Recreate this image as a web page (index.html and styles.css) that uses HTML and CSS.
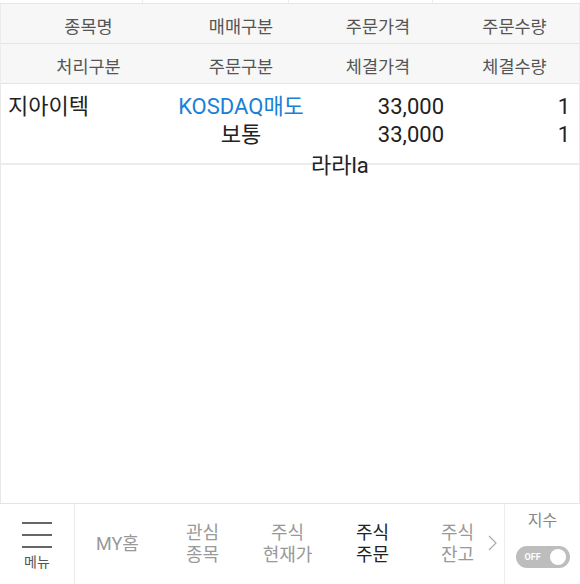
FILE: index.html
```html
<!doctype html>
<html lang="ko">
<head>
    <meta charset="UTF-8">
    <title>주식주문 체결</title>
    <link rel="stylesheet" href="styles.css">
</head>
<body>
<div class="page">
    <ul class="tabs">
        <li></li><li></li><li></li><li></li>
    </ul>

    <div class="head">
        <ul class="head-row">
            <li>종목명</li><li>매매구분</li><li>주문가격</li><li>주문수량</li>
        </ul>
        <ul class="head-row">
            <li>처리구분</li><li>주문구분</li><li>체결가격</li><li>체결수량</li>
        </ul>
    </div>

    <div class="list">
        <div class="item">
            <div class="item-name">지아이텍</div>
            <div class="item-type">
                <span class="blue">KOSDAQ매도</span>
                <span>보통</span>
            </div>
            <div class="item-price">
                <span>33,000</span>
                <span>33,000</span>
            </div>
            <div class="item-qty">
                <span>1</span>
                <span>1</span>
            </div>
            <div class="item-extra">라라la</div>
        </div>
    </div>

    <div class="nav">
        <div class="nav-menu">
            <span class="burger"><i></i><i></i><i></i></span>
            <span class="nav-menu-txt">메뉴</span>
        </div>
        <ul class="nav-list">
            <li>MY홈</li>
            <li>관심<br>종목</li>
            <li>주식<br>현재가</li>
            <li class="on">주식<br>주문</li>
            <li>주식<br>잔고</li>
        </ul>
        <svg class="nav-more" width="9" height="16" viewBox="0 0 9 16"><polyline points="1,1 8,8 1,15" fill="none" stroke="#aaa" stroke-width="1.2"/></svg>
        <div class="nav-index">
            <span class="nav-index-txt">지수</span>
            <span class="switch"><em>OFF</em><b></b></span>
        </div>
    </div>
</div>
</body>
</html>
```

FILE: styles.css
```css
/* reset */
body,ul,li{margin:0;padding:0;}
ul{list-style:none;}
em{font-style:normal;}
html,body{width:100%;height:100%;}
body{font-family: Roboto, "Noto Sans CJK KR", sans-serif; color: #222; background: #fff;}

.page{display: flex; flex-direction: column; height: 584px; width: 580px; overflow: hidden;}

/* top tabs (scrolled off) */
.tabs{display: grid; grid-template-columns: 143px 146px 144px 1fr; height: 3px; border-bottom: 1px solid #e6e6e6;}
.tabs li{border-right: 1px solid #ececec;}
.tabs li:last-child{border-right: 0;}

/* header */
.head{background: #f7f7f7; border-left: 1px solid #ececec; border-right: 1px solid #ececec;}
.head-row{display: grid; grid-template-columns: 175px 130px 144px 1fr; height: 39px; border-bottom: 1px solid #e4e4e4;}
.head-row li{font-size: 17.5px; line-height: 36px; padding-top: 5px; text-align: center; color: #555; box-sizing: border-box;}

/* list */
.list{flex: 1; border-left: 1px solid #e8e8e8; border-right: 1px solid #e8e8e8;}
.item{position: relative; display: grid; grid-template-columns: 175px 130px 144px 1fr; height: 81px; padding-top: 9px; box-sizing: border-box; border-bottom: 2px solid #ececec; font-size: 22px; line-height: 28px;}
.item span{display: block;}
.item-name{padding-left: 7px;}
.item-type{text-align: center;}
.item-price{text-align: right; padding-right: 6px;}
.item-qty{text-align: right; padding-right: 9px;}
.blue{color: #1a80d6;}
.item-extra{position: absolute; left: 310px; top: 68px; font-size: 22px; line-height: 28px; color: #222;}

/* bottom nav */
.nav{position: relative; display: flex; height: 80px; border-top: 1px solid #e4e4e4; background: #fff;}
.nav-menu{width: 75px; border-right: 1px solid #ececec; display: flex; flex-direction: column; align-items: center; padding-top: 18px; box-sizing: border-box;}
.burger{display: flex; flex-direction: column; gap: 10px; width: 30px;}
.burger i{display: block; height: 2px; background: #666;}
.nav-menu-txt{font-size: 14px; line-height: 18px; margin-top: 5px; color: #555;}
.nav-list{display: flex; width: 429px; align-items: center;}
.nav-list li{width: 85px; text-align: center; font-size: 18px; line-height: 22px; color: #999;}
.nav-list li.on{color: #222;}
.nav-more{position: absolute; left: 488px; top: 31px;}
.nav-index{flex: 1; border-left: 1px solid #ececec; display: flex; flex-direction: column; align-items: center; padding-top: 6px;}
.nav-index-txt{font-size: 16px; line-height: 22px; color: #888;}
.switch{position: relative; display: flex; align-items: center; width: 54px; height: 22px; margin-top: 14px; border-radius: 11px; background: #bdbdbd;}
.switch em{font-size: 9px; font-weight: bold; color: #fff; padding-left: 9px;}
.switch b{position: absolute; right: 4px; top: 3px; width: 16px; height: 16px; border-radius: 50%; background: #fff;}
```
